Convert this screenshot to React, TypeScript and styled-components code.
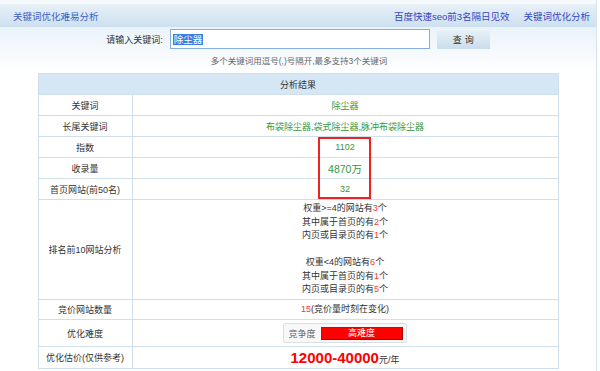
import styled, { createGlobalStyle } from 'styled-components';

const GlobalStyle = createGlobalStyle`
  html, body {
    margin: 0;
    padding: 0;
    background: #fff;
  }
  body {
    font-family: 'Liberation Sans', 'Noto Sans CJK SC', sans-serif;
    font-size: 9px;
    color: #333;
  }
`;

const Page = styled.div`
  width: 597px;
  height: 371px;
  border-right: 1px solid #d3e3ef;
  padding-top: 4px;
  box-sizing: border-box;
  background: #f6f9fc;
  overflow: hidden;
`;

const Header = styled.div`
  height: 23px;
  box-sizing: border-box;
  display: flex;
  align-items: center;
  justify-content: space-between;
  padding: 0 6px 1px 13px;
  background: linear-gradient(#e6f0f8, #cde0ef);
  border-top: 1px solid #eaf2f8;
`;

const Title = styled.span`
  font-size: 9.5px;
  color: #3d62c8;
`;

const Links = styled.div`
  display: flex;
  gap: 14px;
`;

const Link = styled.a`
  font-size: 9.5px;
  color: #3545c8;
  text-decoration: none;
`;

const Body = styled.div`
  background: linear-gradient(#eaf3fa, #ffffff 46px);
  height: 100%;
  padding-top: 2px;
`;

const SearchRow = styled.div`
  display: flex;
  align-items: center;
  justify-content: center;
  height: 20px;
`;

const Label = styled.span`
  margin-right: 7px;
`;

const FakeInput = styled.div`
  width: 256px;
  height: 18px;
  border: 1px solid #86ade4;
  background: #fff;
  display: flex;
  align-items: center;
  padding-left: 2px;
  box-sizing: content-box;
`;

const Selected = styled.span`
  background: #3b7fe0;
  color: #fff;
  font-size: 9.5px;
  line-height: 11px;
  padding: 0 1px;
`;

const SearchButton = styled.button`
  margin-left: 7px;
  width: 53px;
  height: 19px;
  border: none;
  background: linear-gradient(#e7f1f8, #c9ddec);
  font-family: inherit;
  font-size: 9px;
  color: #333;
  letter-spacing: 3px;
  padding: 0 0 0 3px;
`;

const Hint = styled.div`
  text-align: center;
  color: #666;
  font-size: 8.5px;
  line-height: 12px;
  margin-top: 6px;
  margin-left: 2px;
`;

const TableWrap = styled.div`
  position: relative;
  width: 521px;
  margin: 6px auto 0;
`;

const Table = styled.table`
  width: 100%;
  border-collapse: collapse;
  table-layout: fixed;
  background: #fff;
  td, th {
    border: 1px solid #cfe0ec;
    padding: 0;
    text-align: center;
    vertical-align: middle;
    font-weight: normal;
  }
`;

const KeyCol = styled.col`
  width: 94px;
`;

const HeadCell = styled.th`
  background: #d5e6f5;
  color: #333;
  height: 20px;
`;

const Row = styled.tr<{ $h: number }>`
  height: ${p => p.$h}px;
`;

const Key = styled.td`
  color: #333;
`;

const Value = styled.td<{ $big?: boolean }>`
  color: #35973a;
  font-size: ${p => (p.$big ? '10.5px' : '9px')};
`;

const Lines = styled.div`
  line-height: 13.5px;
  color: #333;
`;

const Red = styled.span`
  color: #ff3333;
`;

const Meter = styled.div`
  display: inline-flex;
  align-items: center;
  gap: 5px;
  height: 20px;
  padding: 0 3px 0 4px;
  border: 1px solid #dedede;
  border-radius: 2px;
  background: #f8f8f8;
  color: #666;
  box-sizing: border-box;
`;

const Bar = styled.div`
  width: 82px;
  height: 13px;
  background: #ff0000;
  border: 1px solid #b00000;
  border-top-color: #e00000;
  border-left-color: #e00000;
  box-sizing: border-box;
  color: #fff;
  line-height: 11px;
`;

const Price = styled.span`
  color: #ff0000;
  font-weight: bold;
  font-size: 15px;
  font-family: 'Liberation Sans', sans-serif;
`;

const Unit = styled.span`
  color: #333;
`;

const Highlight = styled.div`
  position: absolute;
  left: 280px;
  top: 64px;
  width: 49px;
  height: 58px;
  border: 2px solid #ee2222;
  pointer-events: none;
`;

const App = () => {
  return (
    <>
      <GlobalStyle />
      <Page>
        <Header>
          <Title>关键词优化难易分析</Title>
          <Links>
            <Link href="#">百度快速seo前3名隔日见效</Link>
            <Link href="#">关键词优化分析</Link>
          </Links>
        </Header>
        <Body>
          <SearchRow>
            <Label>请输入关键词:</Label>
            <FakeInput>
              <Selected>除尘器</Selected>
            </FakeInput>
            <SearchButton>查询</SearchButton>
          </SearchRow>
          <Hint>多个关键词用逗号(,)号隔开,最多支持3个关键词</Hint>
          <TableWrap>
            <Table>
              <colgroup>
                <KeyCol />
                <col />
              </colgroup>
              <thead>
                <tr>
                  <HeadCell colSpan={2}>分析结果</HeadCell>
                </tr>
              </thead>
              <tbody>
                <Row $h={21}>
                  <Key>关键词</Key>
                  <Value>除尘器</Value>
                </Row>
                <Row $h={21}>
                  <Key>长尾关键词</Key>
                  <Value>布袋除尘器,袋式除尘器,脉冲布袋除尘器</Value>
                </Row>
                <Row $h={21}>
                  <Key>指数</Key>
                  <Value>1102</Value>
                </Row>
                <Row $h={21}>
                  <Key>收录量</Key>
                  <Value $big>4870万</Value>
                </Row>
                <Row $h={21}>
                  <Key>首页网站(前50名)</Key>
                  <Value>32</Value>
                </Row>
                <Row $h={100}>
                  <Key>排名前10网站分析</Key>
                  <Value>
                    <Lines>
                      权重&gt;=4的网站有<Red>3</Red>个<br />
                      其中属于首页的有<Red>2</Red>个<br />
                      内页或目录页的有<Red>1</Red>个<br />
                      <br />
                      权重&lt;4的网站有<Red>6</Red>个<br />
                      其中属于首页的有<Red>1</Red>个<br />
                      内页或目录页的有<Red>5</Red>个
                    </Lines>
                  </Value>
                </Row>
                <Row $h={20}>
                  <Key>竞价网站数量</Key>
                  <Value>
                    <Lines>
                      <Red>15</Red>(竞价量时刻在变化)
                    </Lines>
                  </Value>
                </Row>
                <Row $h={27}>
                  <Key>优化难度</Key>
                  <Value>
                    <Meter>
                      竞争度
                      <Bar>高难度</Bar>
                    </Meter>
                  </Value>
                </Row>
                <Row $h={22}>
                  <Key>优化估价(仅供参考)</Key>
                  <Value>
                    <Price>12000-40000</Price>
                    <Unit>元/年</Unit>
                  </Value>
                </Row>
              </tbody>
            </Table>
            <Highlight />
          </TableWrap>
        </Body>
      </Page>
    </>
  );
};

export default App;
